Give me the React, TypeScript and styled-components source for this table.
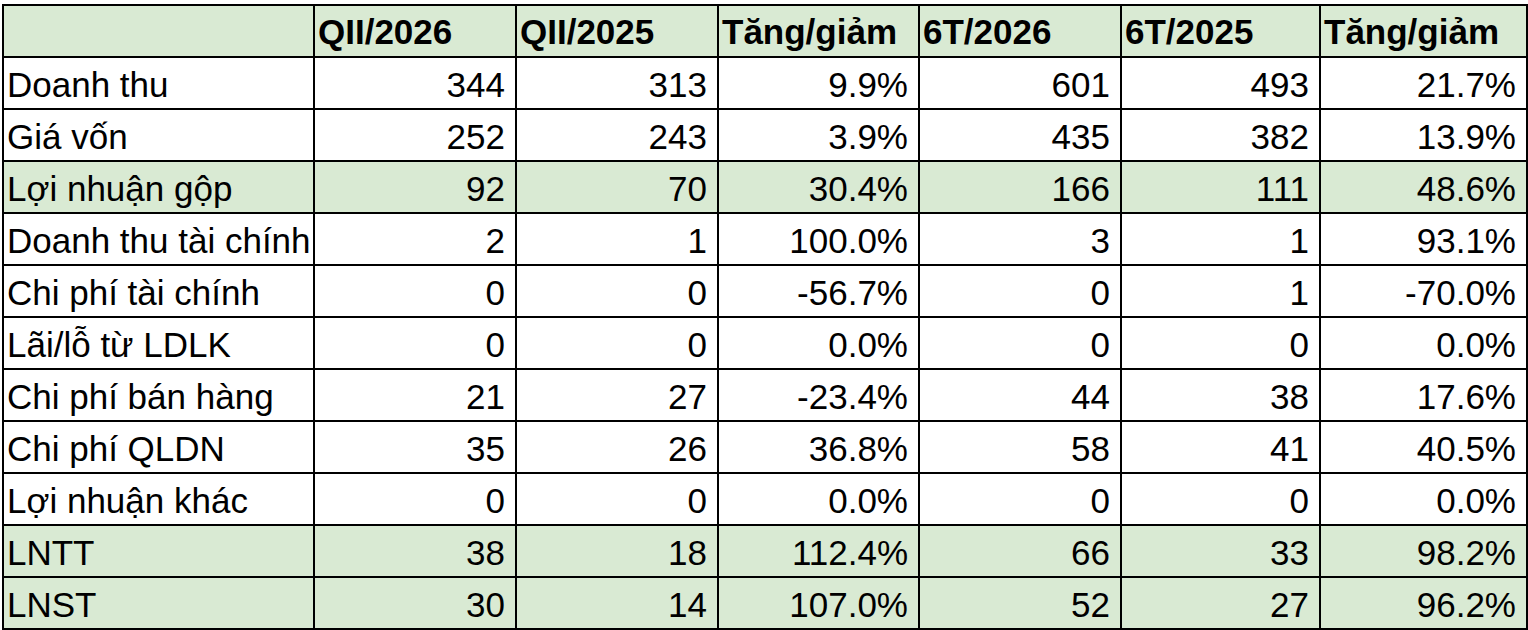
import React from "react";
import styled, { createGlobalStyle } from "styled-components";

const Global = createGlobalStyle`
  html, body { margin: 0; padding: 0; background: #ffffff; }
  body { font-family: "Liberation Sans", Arial, sans-serif; }
`;

const Page = styled.div`
  padding: 4px 0 0 2px;
`;

const Table = styled.table`
  border-collapse: collapse;
  table-layout: fixed;
  width: 1524px;
  font-family: "Liberation Sans", Arial, sans-serif;
  font-size: 35px;
  color: #000;
`;

const Row = styled.tr<{ $hl?: boolean }>`
  background: ${(p) => (p.$hl ? "#d9ead3" : "#ffffff")};
`;

const HeadCell = styled.th`
  border: 2px solid #000;
  padding: 8px 2px 7px 3px;
  line-height: 35px;
  height: 35px;
  font-weight: 700;
  text-align: left;
  white-space: nowrap;
  overflow: hidden;
  vertical-align: bottom;
`;

const LabelCell = styled.td`
  border: 2px solid #000;
  padding: 9px 2px 6px 3px;
  line-height: 35px;
  height: 35px;
  text-align: left;
  white-space: nowrap;
  overflow: hidden;
  vertical-align: bottom;
`;

const NumCell = styled.td`
  border: 2px solid #000;
  padding: 9px 10px 6px 4px;
  line-height: 35px;
  height: 35px;
  text-align: right;
  white-space: nowrap;
  vertical-align: bottom;
`;

const widths = [311, 202, 202, 201, 202, 199, 207];
const headers = ["", "QII/2026", "QII/2025", "Tăng/giảm", "6T/2026", "6T/2025", "Tăng/giảm"];

type R = { label: string; v: string[]; hl?: boolean };
const rows: R[] = [
  { label: "Doanh thu", v: ["344", "313", "9.9%", "601", "493", "21.7%"] },
  { label: "Giá vốn", v: ["252", "243", "3.9%", "435", "382", "13.9%"] },
  { label: "Lợi nhuận gộp", v: ["92", "70", "30.4%", "166", "111", "48.6%"], hl: true },
  { label: "Doanh thu tài chính", v: ["2", "1", "100.0%", "3", "1", "93.1%"] },
  { label: "Chi phí tài chính", v: ["0", "0", "-56.7%", "0", "1", "-70.0%"] },
  { label: "Lãi/lỗ từ LDLK", v: ["0", "0", "0.0%", "0", "0", "0.0%"] },
  { label: "Chi phí bán hàng", v: ["21", "27", "-23.4%", "44", "38", "17.6%"] },
  { label: "Chi phí QLDN", v: ["35", "26", "36.8%", "58", "41", "40.5%"] },
  { label: "Lợi nhuận khác", v: ["0", "0", "0.0%", "0", "0", "0.0%"] },
  { label: "LNTT", v: ["38", "18", "112.4%", "66", "33", "98.2%"], hl: true },
  { label: "LNST", v: ["30", "14", "107.0%", "52", "27", "96.2%"], hl: true },
];

export default function App() {
  return (
    <>
      <Global />
      <Page>
        <Table>
          <colgroup>
            {widths.map((w, i) => (
              <col key={i} style={{ width: w }} />
            ))}
          </colgroup>
          <thead>
            <Row $hl>
              {headers.map((h, i) => (
                <HeadCell key={i}>{h}</HeadCell>
              ))}
            </Row>
          </thead>
          <tbody>
            {rows.map((r) => (
              <Row key={r.label} $hl={r.hl}>
                <LabelCell>{r.label}</LabelCell>
                {r.v.map((x, i) => (
                  <NumCell key={i}>{x}</NumCell>
                ))}
              </Row>
            ))}
          </tbody>
        </Table>
      </Page>
    </>
  );
}
